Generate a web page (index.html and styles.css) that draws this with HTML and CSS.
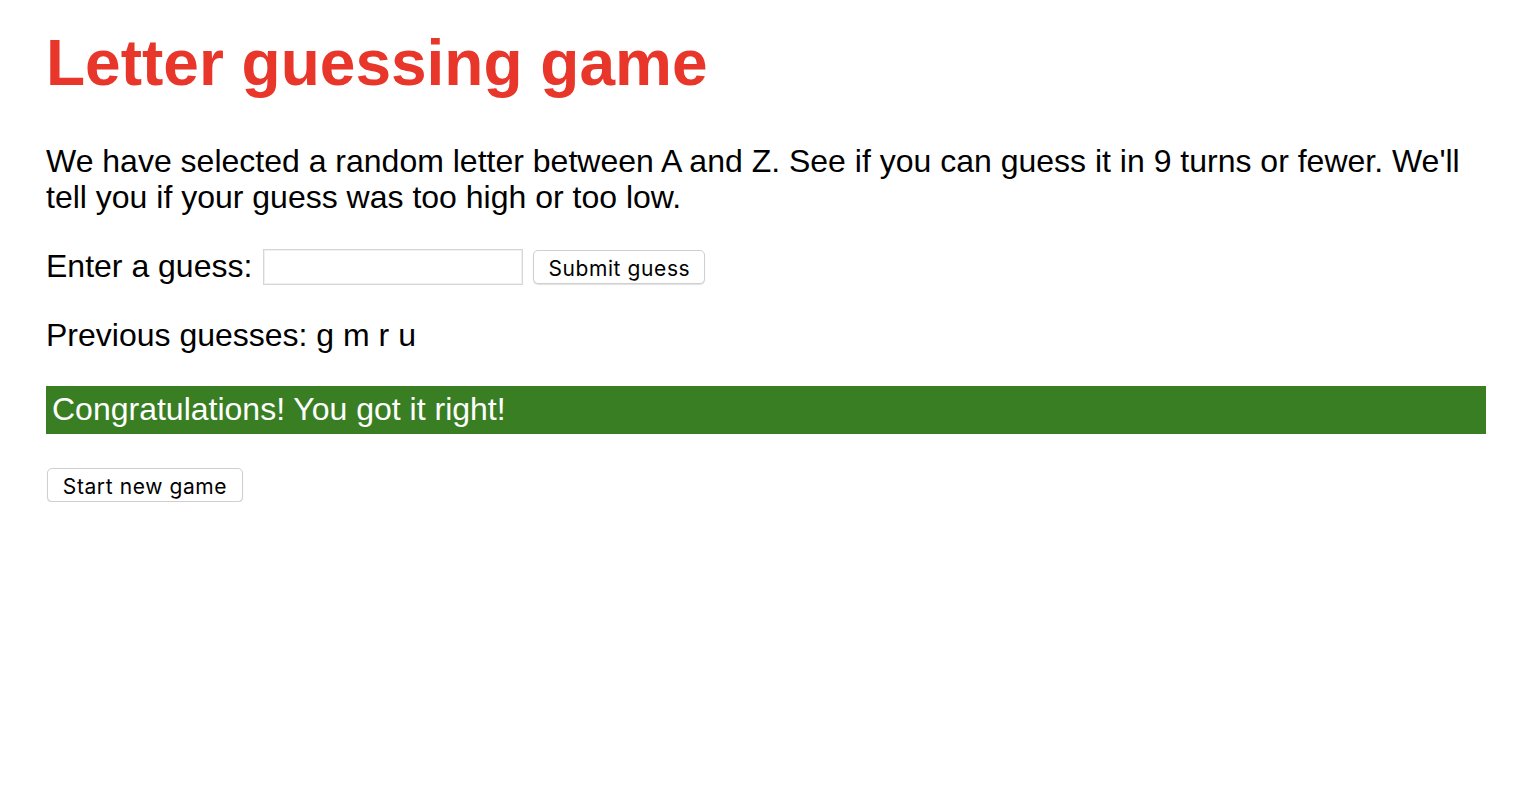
FILE: index.html
```html
<!DOCTYPE html>
<html lang="en">
<head>
<meta charset="utf-8">
<title>Number guessing game</title>
<link rel="stylesheet" href="styles.css">
</head>
<body>
  <h1 class="title">Letter guessing game</h1>
  <p class="intro">We have selected a random letter between A and Z. See if you can guess it in 9 turns or fewer. We'll tell you if your guess was too high or too low.</p>
  <div class="form">
    <label class="label" for="guessField">Enter a guess: </label>
    <input class="guess-field" type="text" id="guessField">
    <button class="btn submit" type="button">Submit guess</button>
  </div>
  <p class="guesses">Previous guesses: g m r u</p>
  <p class="last-result">Congratulations! You got it right!</p>
  <div class="actions">
    <button class="btn new-game" type="button">Start new game</button>
  </div>
</body>
</html>
```
FILE: styles.css
```css
html, body {
  background: #ffffff;
}
body {
  margin: 0 48px 0 46px;
  padding: 0;
  font-family: "Liberation Sans", Arial, Helvetica, sans-serif;
  font-size: 32px;
  line-height: 36px;
  color: #000;
}
.title {
  margin: 26px 0 0;
  font-size: 64px;
  line-height: 74px;
  font-weight: bold;
  color: #e8362a;
}
.intro {
  margin: 43px 0 0;
}
.form {
  display: flex;
  align-items: center;
  margin-top: 34px;
  height: 36px;
}
.label {
  margin-right: 11px;
  padding-bottom: 3px;
}
.guess-field {
  box-sizing: border-box;
  width: 260px;
  height: 36px;
  margin: 0 10px 0 0;
  border: 1px solid #d6d6d6;
  box-shadow: inset 0 0 0 1px #f0f0f0;
  padding: 0 6px;
  font-size: 20px;
  background: #fff;
}
.btn {
  box-sizing: border-box;
  height: 34px;
  border: 1px solid #cfcfcf;
  border-radius: 5px;
  background: #fff;
  box-shadow: 0 1px 1px rgba(0,0,0,0.12);
  font-family: "Inter", "Noto Sans", sans-serif;
  font-size: 21px;
  letter-spacing: 0.6px;
  color: #000;
  padding: 4px 0 0;
  line-height: 28px;
}
.submit {
  width: 172px;
}
.guesses {
  margin: 32px 0 0;
}
.last-result {
  margin: 33px 0 0;
  height: 48px;
  box-sizing: border-box;
  padding: 5px 6px;
  background: #397e23;
  color: #fff;
}
.actions {
  margin-top: 34px;
  padding-left: 1px;
  display: flex;
}
.new-game {
  width: 196px;
}
```
